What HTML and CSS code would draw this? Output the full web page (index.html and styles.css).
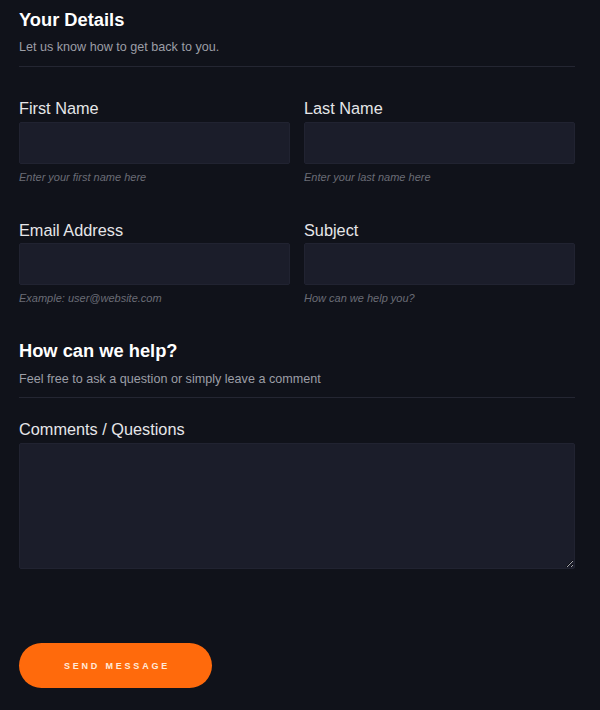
FILE: index.html
```html
<!DOCTYPE html>
<html>
<head>
<meta charset="utf-8">
<link rel="stylesheet" href="styles.css">
</head>
<body>
<form class="form">
  <section class="section">
    <h2 class="section-title">Your Details</h2>
    <p class="section-sub">Let us know how to get back to you.</p>
  </section>
  <div class="row row-first">
    <div class="field">
      <label class="label">First Name</label>
      <input class="input" type="text">
      <span class="help">Enter your first name here</span>
    </div>
    <div class="field">
      <label class="label">Last Name</label>
      <input class="input" type="text">
      <span class="help">Enter your last name here</span>
    </div>
  </div>
  <div class="row row-next">
    <div class="field">
      <label class="label">Email Address</label>
      <input class="input" type="text">
      <span class="help">Example: user@website.com</span>
    </div>
    <div class="field">
      <label class="label">Subject</label>
      <input class="input" type="text">
      <span class="help">How can we help you?</span>
    </div>
  </div>
  <section class="section section-second">
    <h2 class="section-title">How can we help?</h2>
    <p class="section-sub">Feel free to ask a question or simply leave a comment</p>
  </section>
  <div class="field field-comments">
    <label class="label">Comments / Questions</label>
    <textarea class="textarea"></textarea>
  </div>
  <button class="send" type="button">SEND MESSAGE</button>
</form>
</body>
</html>
```
FILE: styles.css
```css
html, body {
  margin: 0;
  padding: 0;
  background: #10121a;
}
body {
  font-family: "Liberation Sans", Arial, sans-serif;
  color: #e8e8ea;
}
.form {
  width: 556px;
  padding: 0 19px;
  display: flex;
  flex-direction: column;
}
.section {
  border-bottom: 1px solid #242632;
  padding-bottom: 11px;
}
.section-title {
  margin: 9px 0 0;
  font-size: 18.3px;
  line-height: 22px;
  font-weight: bold;
  color: #ffffff;
}
.section-sub {
  margin: 8px 0 0;
  font-size: 12.6px;
  line-height: 16px;
  color: #9c9ea6;
}
.section-second {
  margin-top: 26px;
  padding-bottom: 10px;
}
.section-second .section-sub {
  margin-top: 9px;
}
.row {
  display: grid;
  grid-template-columns: 1fr 1fr;
  column-gap: 14px;
}
.row-first { margin-top: 30px; }
.row-next { margin-top: 35px; }
.field {
  display: flex;
  flex-direction: column;
}
.label {
  font-size: 16.3px;
  line-height: 20px;
  color: #e6e6e9;
  margin-bottom: 5px;
}
.row-first .label { padding-top: 1px; margin-bottom: 4px; }
.row-next .label { padding-top: 1px; margin-bottom: 3px; }
.input, .textarea {
  box-sizing: border-box;
  width: 100%;
  margin: 0;
  background: #1b1d2a;
  border: 1px solid #212331;
  border-radius: 2px;
  outline: none;
  color: #e6e6e9;
  font-family: inherit;
}
.input {
  height: 42px;
}
.help {
  margin-top: 6px;
  font-size: 11px;
  line-height: 14px;
  font-style: italic;
  color: #6a6c76;
}
.field-comments {
  margin-top: 21px;
}
.field-comments .label { margin-bottom: 4px; }
.textarea {
  height: 126px;
  resize: vertical;
  display: block;
}
.send {
  margin-top: 74px;
  width: 193px;
  height: 45px;
  border: none;
  border-radius: 23px;
  background: #ff6a0c;
  color: #ffeadb;
  font-family: "Liberation Sans", Arial, sans-serif;
  font-weight: bold;
  font-size: 9px;
  letter-spacing: 2.8px;
  padding: 0 0 0 3px;
  cursor: pointer;
}
```
